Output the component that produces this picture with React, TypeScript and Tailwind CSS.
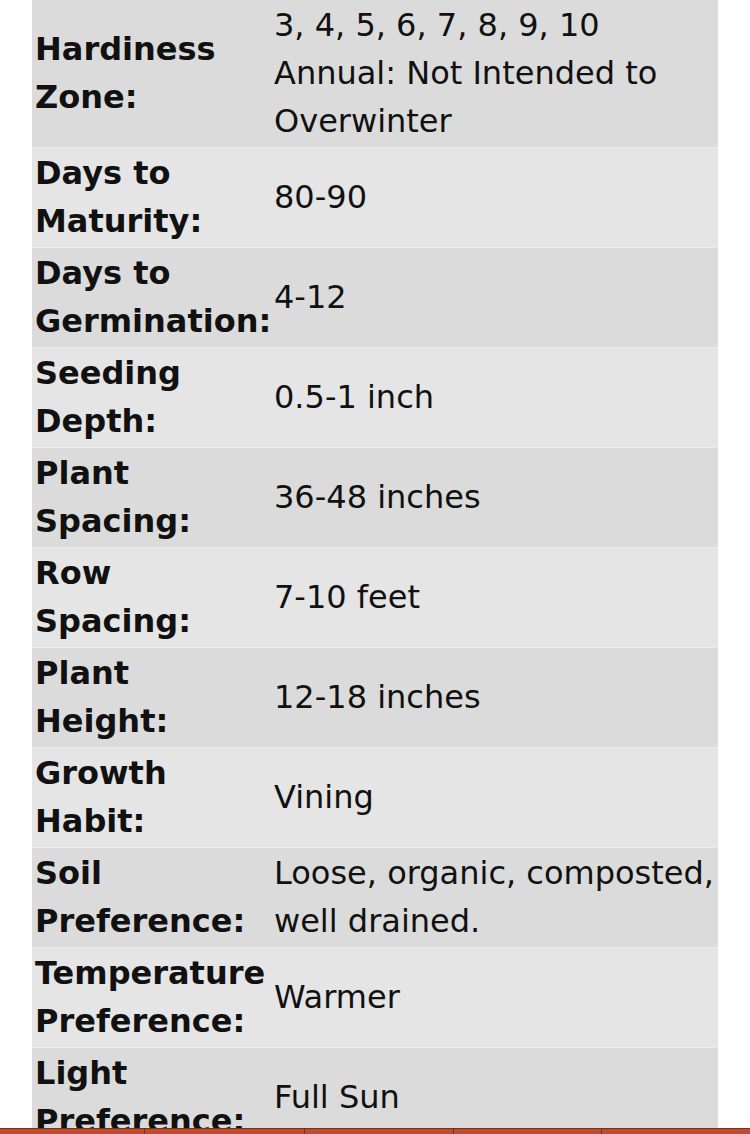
const rows: { label: string[]; value: string[] }[] = [
  { label: ['Hardiness', 'Zone:'], value: ['3, 4, 5, 6, 7, 8, 9, 10', 'Annual: Not Intended to', 'Overwinter'] },
  { label: ['Days to', 'Maturity:'], value: ['80-90'] },
  { label: ['Days to', 'Germination:'], value: ['4-12'] },
  { label: ['Seeding', 'Depth:'], value: ['0.5-1 inch'] },
  { label: ['Plant', 'Spacing:'], value: ['36-48 inches'] },
  { label: ['Row', 'Spacing:'], value: ['7-10 feet'] },
  { label: ['Plant', 'Height:'], value: ['12-18 inches'] },
  { label: ['Growth', 'Habit:'], value: ['Vining'] },
  { label: ['Soil', 'Preference:'], value: ['Loose, organic, composted,', 'well drained.'] },
  { label: ['Temperature', 'Preference:'], value: ['Warmer'] },
  { label: ['Light', 'Preference:'], value: ['Full Sun'] },
];

export default function App() {
  return (
    <div className="relative h-[1134px] overflow-hidden bg-white font-['DejaVu_Sans',Verdana,sans-serif] text-[32px] leading-[48px] text-[#111]">
      <table className="ml-[32px] mt-[-1px] w-[686px] table-fixed border-separate border-spacing-0">
        <colgroup>
          <col className="w-[238px]" />
          <col />
        </colgroup>
        <tbody>
          {rows.map((r, i) => (
            <tr key={i} className={i % 2 === 0 ? 'bg-[#dbdbdb]' : 'bg-[#e5e5e5]'}>
              <td className="border-t border-[#ececec] pl-[3px] pt-px pb-[2px] align-middle font-bold whitespace-nowrap">
                {r.label.map((l, j) => (
                  <div key={j}>{l}</div>
                ))}
              </td>
              <td className="border-t border-[#ececec] pl-[4px] pt-px pb-[2px] align-middle whitespace-nowrap">
                {r.value.map((v, j) => (
                  <div key={j}>{v}</div>
                ))}
              </td>
            </tr>
          ))}
        </tbody>
      </table>

      {/* bottom nav bar, mostly off-screen */}
      <div className="fixed left-0 right-0 top-[1128px] flex h-[60px] border-t border-[#6b3521] bg-[#c14b2b]">
        <div className="w-[145px] border-r border-[#6b3521]" />
        <div className="w-[160px] border-r border-[#6b3521]" />
        <div className="w-[149px] border-r border-[#6b3521]" />
        <div className="w-[148px] border-r border-[#6b3521]" />
        <div className="flex-1" />
      </div>
    </div>
  );
}
